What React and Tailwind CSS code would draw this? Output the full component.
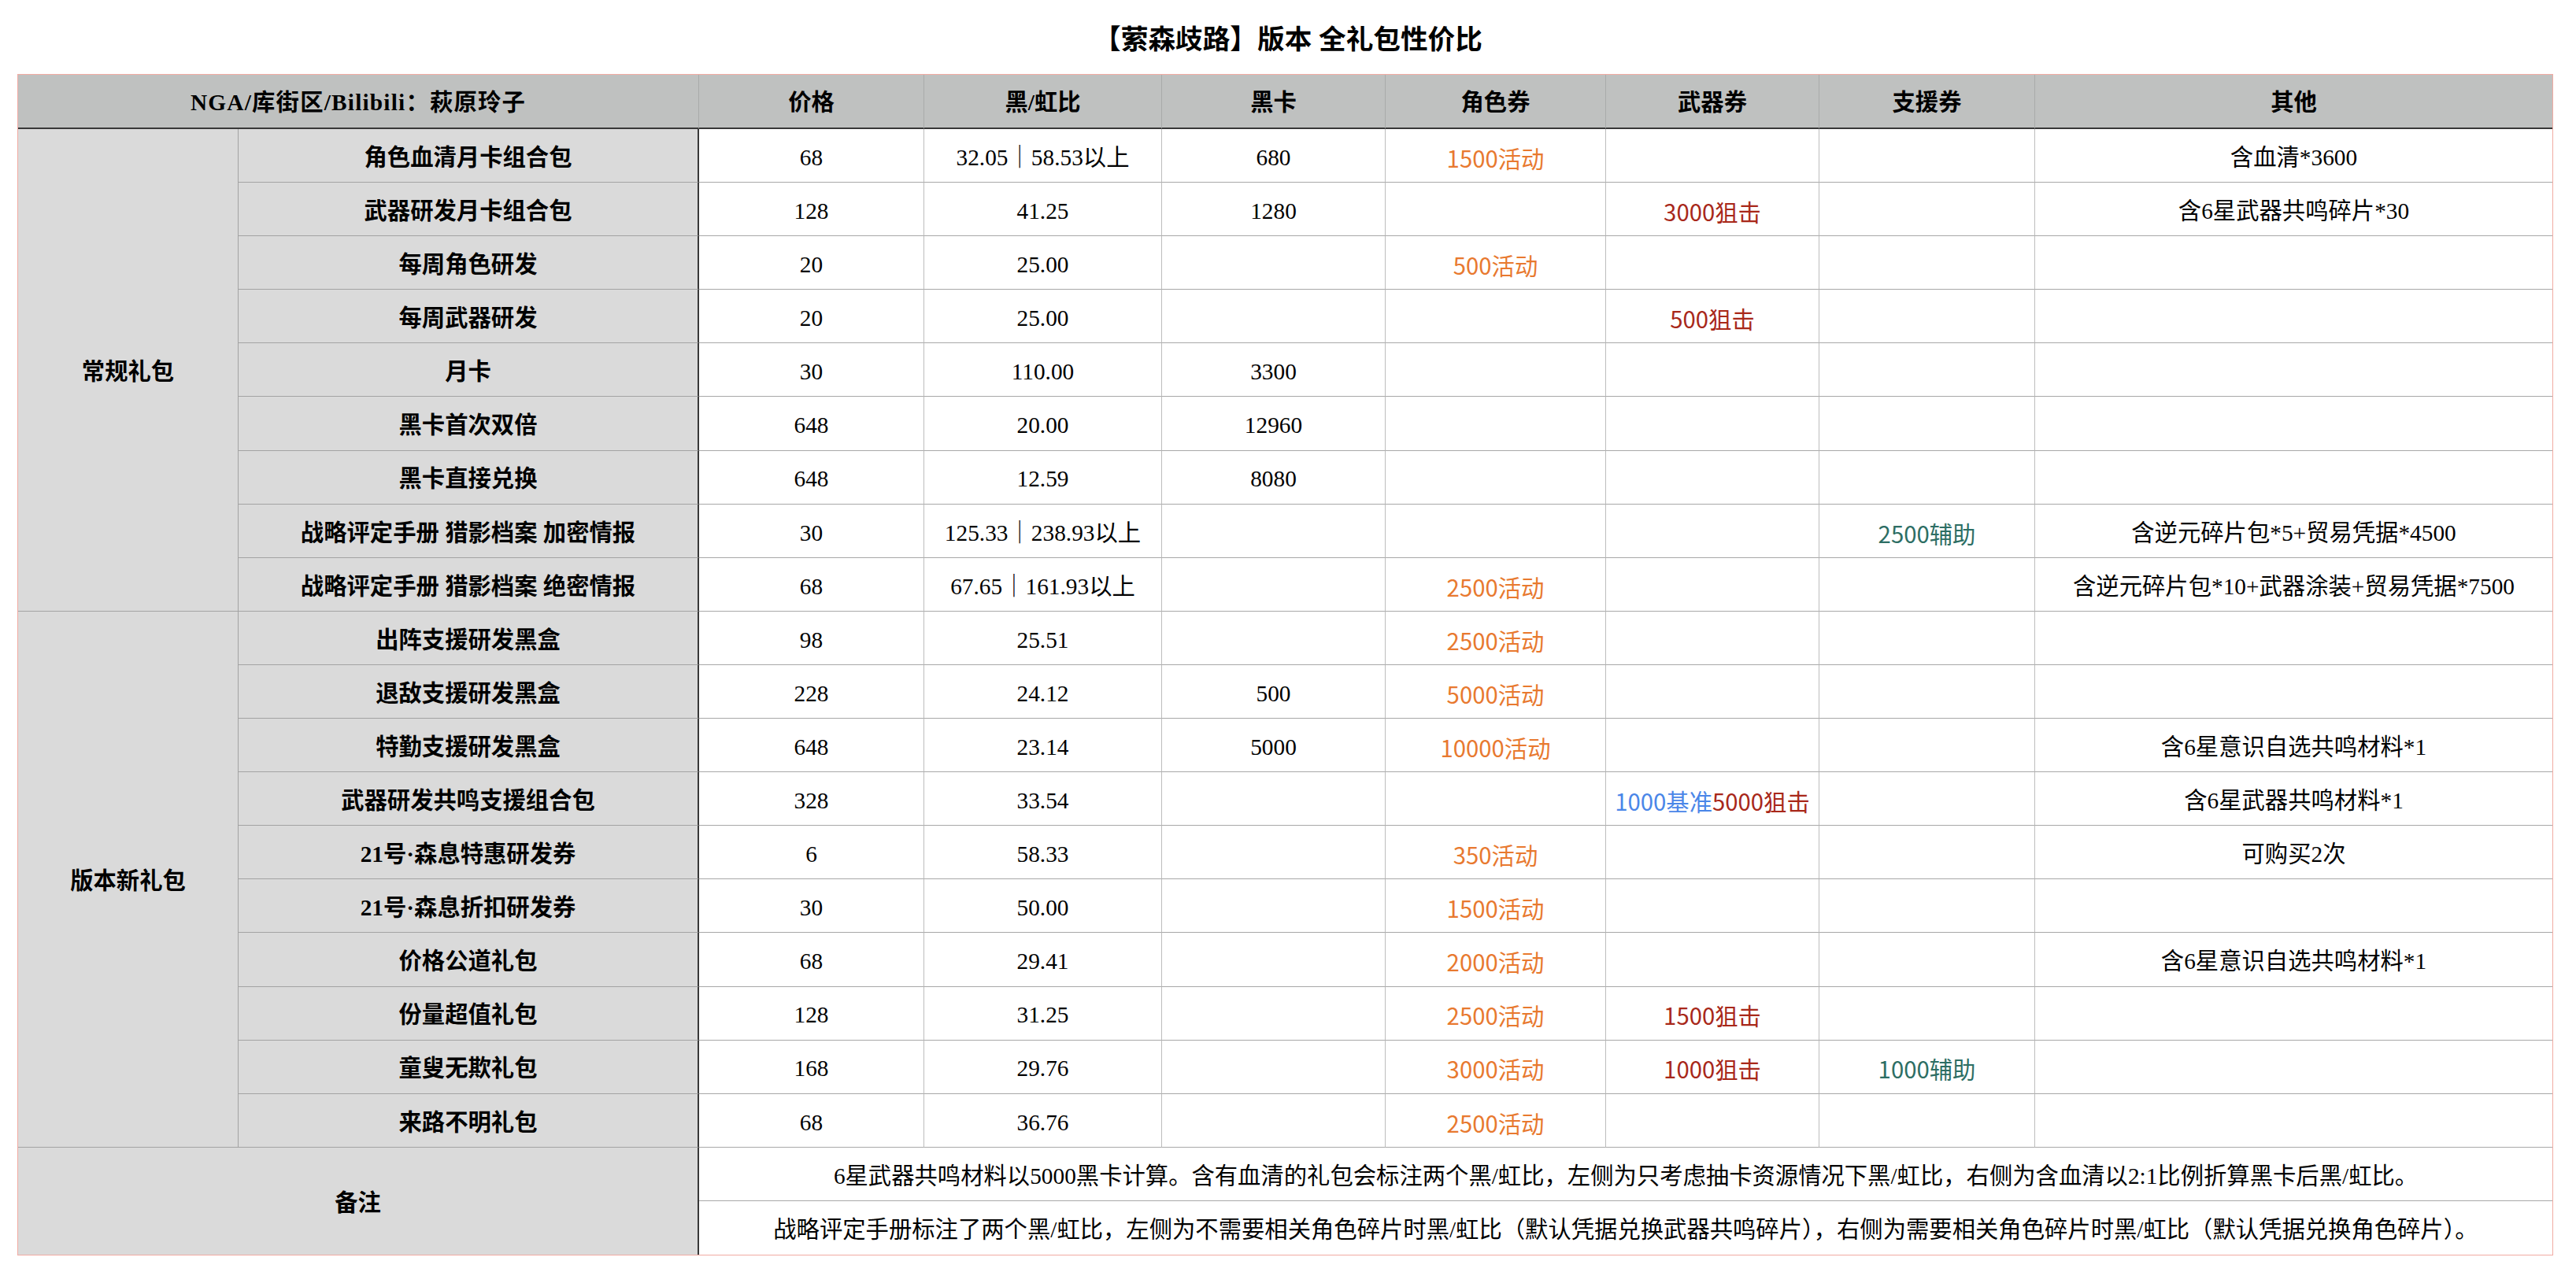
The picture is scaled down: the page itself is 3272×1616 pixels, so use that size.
import React from "react";

const O = "#e8792f";
const R = "#a8281a";
const B = "#4a86e8";
const T = "#2d6e64";

const groups = [
  {
    name: "常规礼包",
    rows: [
      ["角色血清月卡组合包", "68", "32.05｜58.53以上", "680", [["1500活动", O]], null, null, "含血清*3600"],
      ["武器研发月卡组合包", "128", "41.25", "1280", null, [["3000狙击", R]], null, "含6星武器共鸣碎片*30"],
      ["每周角色研发", "20", "25.00", "", [["500活动", O]], null, null, ""],
      ["每周武器研发", "20", "25.00", "", null, [["500狙击", R]], null, ""],
      ["月卡", "30", "110.00", "3300", null, null, null, ""],
      ["黑卡首次双倍", "648", "20.00", "12960", null, null, null, ""],
      ["黑卡直接兑换", "648", "12.59", "8080", null, null, null, ""],
      ["战略评定手册 猎影档案 加密情报", "30", "125.33｜238.93以上", "", null, null, [["2500辅助", T]], "含逆元碎片包*5+贸易凭据*4500"],
      ["战略评定手册 猎影档案 绝密情报", "68", "67.65｜161.93以上", "", [["2500活动", O]], null, null, "含逆元碎片包*10+武器涂装+贸易凭据*7500"],
    ],
  },
  {
    name: "版本新礼包",
    rows: [
      ["出阵支援研发黑盒", "98", "25.51", "", [["2500活动", O]], null, null, ""],
      ["退敌支援研发黑盒", "228", "24.12", "500", [["5000活动", O]], null, null, ""],
      ["特勤支援研发黑盒", "648", "23.14", "5000", [["10000活动", O]], null, null, "含6星意识自选共鸣材料*1"],
      ["武器研发共鸣支援组合包", "328", "33.54", "", null, [["1000基准", B], ["5000狙击", R]], null, "含6星武器共鸣材料*1"],
      ["21号·森息特惠研发券", "6", "58.33", "", [["350活动", O]], null, null, "可购买2次"],
      ["21号·森息折扣研发券", "30", "50.00", "", [["1500活动", O]], null, null, ""],
      ["价格公道礼包", "68", "29.41", "", [["2000活动", O]], null, null, "含6星意识自选共鸣材料*1"],
      ["份量超值礼包", "128", "31.25", "", [["2500活动", O]], [["1500狙击", R]], null, ""],
      ["童叟无欺礼包", "168", "29.76", "", [["3000活动", O]], [["1000狙击", R]], [["1000辅助", T]], ""],
      ["来路不明礼包", "68", "36.76", "", [["2500活动", O]], null, null, ""],
    ],
  },
];

const headers = ["价格", "黑/虹比", "黑卡", "角色券", "武器券", "支援券", "其他"];

function Colored({ parts }) {
  if (!parts) return null;
  return (
    <span className="font-['Noto_Sans_CJK_SC',sans-serif]">
      {parts.map(([t, c], i) => (
        <span key={i} style={{ color: c }}>
          {t}
        </span>
      ))}
    </span>
  );
}

export default function App() {
  const dataCell =
    "flex items-center justify-center pt-[6px] bg-white border-b border-b-[#a8a8a8] whitespace-nowrap";
  const dataR = " border-r border-r-[#bdbdbd]";
  return (
    <div className="w-[3272px] h-[1616px] bg-white text-black font-['Liberation_Serif','Noto_Sans_CJK_SC',serif] text-[29.33px] leading-none">
      <div className="h-[94px] flex items-center justify-center pt-[6px] font-bold text-[34.67px]">
        【萦森歧路】版本 全礼包性价比
      </div>
      <div className="ml-[22px] w-[3221px] border border-[#f2aba3]">
        <div className="grid grid-cols-[280px_585px_286px_302px_284px_280px_271px_274px_1fr] grid-rows-[69px_repeat(21,68.1px)]">
          <div className="col-span-2 flex items-center justify-center pt-[4px] bg-[#bfc1c0] border-b-2 border-b-[#383838] border-r border-r-[#a9abaa] font-bold tracking-[1.2px]">
            NGA/库街区/Bilibili：萩原玲子
          </div>
          {headers.map((h, i) => (
            <div
              key={h}
              className={
                "flex items-center justify-center pt-[4px] bg-[#bfc1c0] border-b-2 border-b-[#383838] font-bold" +
                (i < headers.length - 1 ? " border-r border-r-[#a9abaa]" : "")
              }
            >
              {h}
            </div>
          ))}
          {groups.map((g) => (
            <React.Fragment key={g.name}>
              <div
                className={
                  "flex items-center justify-center pt-[6px] bg-[#dadada] border-b border-b-[#a3a3a3] border-r border-r-[#a3a3a3] font-bold " +
                  (g.rows.length === 9 ? "row-span-9" : "row-span-10")
                }
              >
                {g.name}
              </div>
              {g.rows.map((r) => (
                <React.Fragment key={r[0]}>
                  <div className="flex items-center justify-center pt-[6px] bg-[#dadada] border-b border-b-[#a3a3a3] border-r-2 border-r-[#383838] font-bold whitespace-nowrap">
                    {r[0]}
                  </div>
                  <div className={dataCell + dataR}>{r[1]}</div>
                  <div className={dataCell + dataR}>{r[2]}</div>
                  <div className={dataCell + dataR}>{r[3]}</div>
                  <div className={dataCell + dataR}>
                    <Colored parts={r[4]} />
                  </div>
                  <div className={dataCell + dataR}>
                    <Colored parts={r[5]} />
                  </div>
                  <div className={dataCell + dataR}>
                    <Colored parts={r[6]} />
                  </div>
                  <div className={dataCell}>{r[7]}</div>
                </React.Fragment>
              ))}
            </React.Fragment>
          ))}
          <div className="col-span-2 row-span-2 flex items-center justify-center pt-[6px] bg-[#dadada] border-r-2 border-r-[#383838] font-bold">
            备注
          </div>
          <div className="col-span-7 flex items-center justify-center pt-[6px] bg-white border-b border-b-[#a8a8a8] whitespace-nowrap">
            6星武器共鸣材料以5000黑卡计算。含有血清的礼包会标注两个黑/虹比，左侧为只考虑抽卡资源情况下黑/虹比，右侧为含血清以2:1比例折算黑卡后黑/虹比。
          </div>
          <div className="col-span-7 flex items-center justify-center pt-[6px] bg-white whitespace-nowrap">
            战略评定手册标注了两个黑/虹比，左侧为不需要相关角色碎片时黑/虹比（默认凭据兑换武器共鸣碎片），右侧为需要相关角色碎片时黑/虹比（默认凭据兑换角色碎片）。
          </div>
        </div>
      </div>
    </div>
  );
}
